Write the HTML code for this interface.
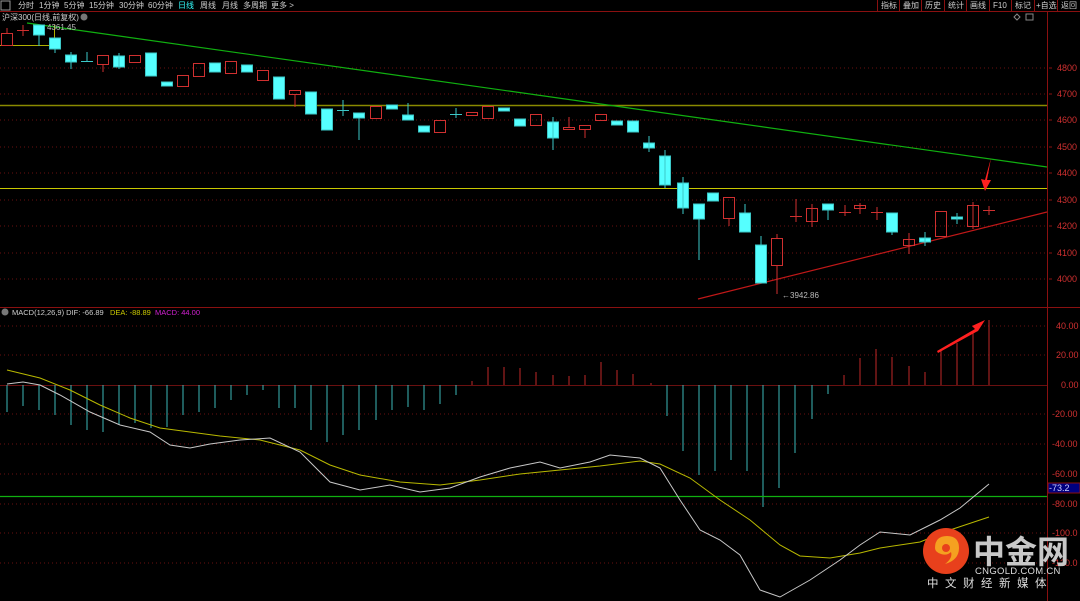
<!DOCTYPE html>
<html><head><meta charset="utf-8"><style>
body{margin:0;background:#000;width:1080px;height:601px;overflow:hidden;font-family:"Liberation Sans","Noto Sans CJK SC",sans-serif}
svg{display:block}
text{font-family:"Liberation Sans","Noto Sans CJK SC",sans-serif}
</style></head><body>
<svg width="1080" height="601" viewBox="0 0 1080 601">
<rect width="1080" height="601" fill="#000"/>
<!-- top bar -->
<line x1="0" y1="11.5" x2="1080" y2="11.5" stroke="#8a1010"/>
<rect x="1" y="1" width="9" height="9" fill="none" stroke="#999"/>
<g font-size="8" fill="#cfcfcf">
<text x="18" y="8">分时</text><text x="39" y="8">1分钟</text><text x="64" y="8">5分钟</text><text x="89" y="8">15分钟</text><text x="119" y="8">30分钟</text><text x="148" y="8">60分钟</text>
<text x="178" y="8" fill="#33ffff">日线</text><text x="200" y="8">周线</text><text x="222" y="8">月线</text><text x="243" y="8">多周期</text><text x="271" y="8">更多 &gt;</text>
<text x="881" y="8">指标</text><text x="903" y="8">叠加</text><text x="925" y="8">历史</text><text x="948" y="8">统计</text><text x="970" y="8">画线</text><text x="993" y="8">F10</text><text x="1015" y="8">标记</text><text x="1036" y="8">+自选</text><text x="1061" y="8">返回</text>
</g>
<g stroke="#8a1010"><line x1="877.5" y1="0" x2="877.5" y2="11"/><line x1="899.5" y1="0" x2="899.5" y2="11"/><line x1="921.5" y1="0" x2="921.5" y2="11"/><line x1="944.5" y1="0" x2="944.5" y2="11"/><line x1="966.5" y1="0" x2="966.5" y2="11"/><line x1="989.5" y1="0" x2="989.5" y2="11"/><line x1="1011.5" y1="0" x2="1011.5" y2="11"/><line x1="1034.5" y1="0" x2="1034.5" y2="11"/><line x1="1057.5" y1="0" x2="1057.5" y2="11"/></g>
<text x="2" y="20" font-size="8" fill="#cfcfcf">沪深300(日线,前复权)</text>
<circle cx="84" cy="17" r="3.5" fill="#777"/>
<rect x="1026" y="14" width="7" height="6" fill="none" stroke="#888"/>
<path d="M1017 14 l3 3 l-3 3 l-3 -3z" fill="none" stroke="#888"/>
<!-- axis -->
<line x1="1047.5" y1="12" x2="1047.5" y2="601" stroke="#8a1010"/>
<line x1="0" y1="307.5" x2="1080" y2="307.5" stroke="#8a1010"/>
<g stroke="#6a1010" stroke-dasharray="1 3">
<line x1="0" y1="68" x2="1047" y2="68"/><line x1="0" y1="94" x2="1047" y2="94"/><line x1="0" y1="120" x2="1047" y2="120"/><line x1="0" y1="147" x2="1047" y2="147"/><line x1="0" y1="173" x2="1047" y2="173"/><line x1="0" y1="200" x2="1047" y2="200"/><line x1="0" y1="226" x2="1047" y2="226"/><line x1="0" y1="253" x2="1047" y2="253"/><line x1="0" y1="279" x2="1047" y2="279"/>
<line x1="0" y1="326" x2="1047" y2="326"/><line x1="0" y1="355" x2="1047" y2="355"/><line x1="0" y1="414" x2="1047" y2="414"/><line x1="0" y1="444" x2="1047" y2="444"/><line x1="0" y1="474" x2="1047" y2="474"/><line x1="0" y1="504" x2="1047" y2="504"/><line x1="0" y1="533" x2="1047" y2="533"/><line x1="0" y1="563" x2="1047" y2="563"/>
</g>
<line x1="0" y1="385.5" x2="1047" y2="385.5" stroke="#6a1010"/>
<g font-size="9" fill="#d03030">
<text x="1057" y="71">4800</text><text x="1057" y="97">4700</text><text x="1057" y="123">4600</text><text x="1057" y="150">4500</text><text x="1057" y="176">4400</text><text x="1057" y="203">4300</text><text x="1057" y="229">4200</text><text x="1057" y="256">4100</text><text x="1057" y="282">4000</text>
<text x="1056" y="329">40.00</text><text x="1056" y="358">20.00</text><text x="1061" y="388">0.00</text><text x="1052" y="417">-20.00</text><text x="1052" y="447">-40.00</text><text x="1052" y="477">-60.00</text><text x="1052" y="507">-80.00</text><text x="1052" y="536">-100.0</text><text x="1052" y="566">-120.0</text>
</g>
<rect x="1048" y="483" width="32" height="10" fill="#000080" stroke="#8a1010"/>
<text x="1049" y="491" font-size="9" fill="#ccf">-73.2</text>
<g stroke="#8a1010"><line x1="1049" y1="68" x2="1052" y2="68"/><line x1="1049" y1="94" x2="1052" y2="94"/><line x1="1049" y1="120" x2="1052" y2="120"/><line x1="1049" y1="147" x2="1052" y2="147"/><line x1="1049" y1="173" x2="1052" y2="173"/><line x1="1049" y1="200" x2="1052" y2="200"/><line x1="1049" y1="226" x2="1052" y2="226"/><line x1="1049" y1="253" x2="1052" y2="253"/><line x1="1049" y1="279" x2="1052" y2="279"/></g>
<!-- lines -->
<line x1="0" y1="105.5" x2="1047" y2="105.5" stroke="#8a8a00" stroke-width="1.5"/>
<line x1="0" y1="188.5" x2="1047" y2="188.5" stroke="#c8c800"/>
<line x1="0" y1="45.5" x2="55" y2="45.5" stroke="#b0b000"/>
<line x1="54.5" y1="25" x2="54.5" y2="45" stroke="#b0b000"/>
<line x1="27" y1="23" x2="1047" y2="167" stroke="#10b010" stroke-width="1.2"/>
<line x1="698" y1="299" x2="1047" y2="212" stroke="#c01818" stroke-width="1.2"/>
<text x="47" y="30" font-size="8" fill="#bbb">4361.45</text>
<text x="782" y="298" font-size="8" fill="#bbb">←3942.86</text>
<!-- candles -->
<g fill="#55ffff" stroke="#3cc8c8">
<rect x="33.5" y="25" width="11" height="10"/><rect x="49.5" y="38" width="11" height="11"/><rect x="65.5" y="55" width="11" height="7"/><rect x="113.5" y="56" width="11" height="11"/><rect x="145.5" y="53" width="11" height="23"/><rect x="161.5" y="82" width="11" height="4"/><rect x="209.5" y="63" width="11" height="9"/><rect x="241.5" y="65" width="11" height="7"/><rect x="273.5" y="77" width="11" height="22"/><rect x="305.5" y="92" width="11" height="22"/><rect x="321.5" y="109" width="11" height="21"/>
<rect x="353.5" y="113" width="11" height="5"/><rect x="386.5" y="105" width="11" height="4"/><rect x="402.5" y="115" width="11" height="5"/><rect x="418.5" y="126" width="11" height="6"/><rect x="498.5" y="108" width="11" height="3"/><rect x="514.5" y="119" width="11" height="7"/><rect x="547.5" y="122" width="11" height="16"/><rect x="611.5" y="121" width="11" height="4"/><rect x="627.5" y="121" width="11" height="11"/><rect x="643.5" y="143" width="11" height="5"/>
<rect x="659.5" y="156" width="11" height="29"/><rect x="677.5" y="183" width="11" height="25"/><rect x="693.5" y="204" width="11" height="15"/><rect x="707.5" y="193" width="11" height="8"/><rect x="739.5" y="213" width="11" height="19"/><rect x="755.5" y="245" width="11" height="38"/><rect x="822.5" y="204" width="11" height="6"/><rect x="886.5" y="213" width="11" height="19"/><rect x="919.5" y="238" width="11" height="4"/><rect x="951.5" y="217" width="11" height="2"/>
</g>
<g stroke="#3cc8c8">
<line x1="39" y1="35" x2="39" y2="46"/><line x1="55" y1="49" x2="55" y2="53"/><line x1="71" y1="52" x2="71" y2="69"/><line x1="87" y1="52" x2="87" y2="62"/><line x1="81" y1="61.5" x2="93" y2="61.5"/><line x1="119" y1="53" x2="119" y2="69"/><line x1="343" y1="100" x2="343" y2="116"/><line x1="337" y1="110.5" x2="349" y2="110.5"/><line x1="359" y1="118" x2="359" y2="140"/><line x1="408" y1="103" x2="408" y2="115"/><line x1="456" y1="108" x2="456" y2="118"/><line x1="450" y1="114.5" x2="462" y2="114.5"/><line x1="553" y1="117" x2="553" y2="150"/><line x1="649" y1="136" x2="649" y2="152"/><line x1="665" y1="150" x2="665" y2="188"/><line x1="683" y1="177" x2="683" y2="214"/><line x1="699" y1="219" x2="699" y2="260"/><line x1="745" y1="204" x2="745" y2="213"/><line x1="761" y1="236" x2="761" y2="245"/><line x1="828" y1="210" x2="828" y2="220"/><line x1="925" y1="232" x2="925" y2="246"/><line x1="957" y1="213" x2="957" y2="224"/><line x1="892" y1="232" x2="892" y2="235"/></g>
<g fill="none" stroke="#d03030">
<rect x="1.5" y="33.5" width="11" height="12"/><rect x="97.5" y="55.5" width="11" height="9"/><rect x="129.5" y="55.5" width="11" height="7"/><rect x="177.5" y="75.5" width="11" height="11"/><rect x="193.5" y="63.5" width="11" height="13"/><rect x="225.5" y="61.5" width="11" height="12"/><rect x="257.5" y="70.5" width="11" height="10"/><rect x="289.5" y="90.5" width="11" height="4"/>
<rect x="370.5" y="106.5" width="11" height="12"/><rect x="434.5" y="120.5" width="11" height="12"/><rect x="466.5" y="112.5" width="11" height="3"/><rect x="482.5" y="106.5" width="11" height="12"/><rect x="530.5" y="114.5" width="11" height="11"/><rect x="563.5" y="127.5" width="11" height="2"/><rect x="579.5" y="125.5" width="11" height="4"/><rect x="595.5" y="114.5" width="11" height="6"/>
<rect x="723.5" y="197.5" width="11" height="21"/><rect x="771.5" y="238.5" width="11" height="27"/><rect x="806.5" y="208.5" width="11" height="13"/><rect x="854.5" y="205.5" width="11" height="3"/><rect x="903.5" y="239.5" width="11" height="6"/><rect x="935.5" y="211.5" width="11" height="25"/><rect x="967.5" y="205.5" width="11" height="21"/>
</g>
<g stroke="#d03030">
<line x1="7" y1="28" x2="7" y2="33"/><line x1="23" y1="25" x2="23" y2="36"/><line x1="17" y1="30.5" x2="29" y2="30.5"/><line x1="103" y1="65" x2="103" y2="72"/><line x1="295" y1="95" x2="295" y2="107"/><line x1="569" y1="117" x2="569" y2="127"/><line x1="585" y1="130" x2="585" y2="138"/><line x1="729" y1="219" x2="729" y2="226"/><line x1="777" y1="234" x2="777" y2="238"/><line x1="777" y1="266" x2="777" y2="294"/>
<line x1="796" y1="199" x2="796" y2="222"/><line x1="790" y1="216.5" x2="802" y2="216.5"/><line x1="812" y1="204" x2="812" y2="227"/><line x1="845" y1="205" x2="845" y2="216"/><line x1="839" y1="212.5" x2="851" y2="212.5"/><line x1="860" y1="203" x2="860" y2="214"/><line x1="877" y1="207" x2="877" y2="220"/><line x1="871" y1="212.5" x2="883" y2="212.5"/><line x1="909" y1="233" x2="909" y2="254"/><line x1="973" y1="202" x2="973" y2="229"/><line x1="989" y1="206" x2="989" y2="215"/><line x1="983" y1="210.5" x2="995" y2="210.5"/>
</g>
<!-- red arrow main -->
<path d="M991 158 L987 180 L991 180 L985 191 L981 179 L985 180 Z" fill="#ff2020"/>
<!-- MACD header -->
<circle cx="5" cy="312" r="3.5" fill="#777"/>
<text x="12" y="315" font-size="7.5" fill="#cfcfcf">MACD(12,26,9) DIF: -66.89</text>
<text x="110" y="315" font-size="7.5" fill="#c8c800">DEA: -88.89</text>
<text x="155" y="315" font-size="7.5" fill="#d020d0">MACD: 44.00</text>
<!-- histogram -->
<g stroke="#3cb8b8">
<line x1="7" y1="385" x2="7" y2="412"/><line x1="23" y1="385" x2="23" y2="406"/><line x1="39" y1="385" x2="39" y2="410"/><line x1="55" y1="385" x2="55" y2="415"/><line x1="71" y1="385" x2="71" y2="425"/><line x1="87" y1="385" x2="87" y2="430"/><line x1="103" y1="385" x2="103" y2="432"/><line x1="119" y1="385" x2="119" y2="425"/><line x1="135" y1="385" x2="135" y2="423"/><line x1="151" y1="385" x2="151" y2="428"/><line x1="167" y1="385" x2="167" y2="427"/><line x1="183" y1="385" x2="183" y2="415"/><line x1="199" y1="385" x2="199" y2="412"/><line x1="215" y1="385" x2="215" y2="408"/><line x1="231" y1="385" x2="231" y2="400"/><line x1="247" y1="385" x2="247" y2="395"/><line x1="263" y1="385" x2="263" y2="390"/><line x1="279" y1="385" x2="279" y2="408"/><line x1="295" y1="385" x2="295" y2="408"/><line x1="311" y1="385" x2="311" y2="430"/><line x1="327" y1="385" x2="327" y2="442"/><line x1="343" y1="385" x2="343" y2="435"/><line x1="359" y1="385" x2="359" y2="430"/><line x1="376" y1="385" x2="376" y2="420"/><line x1="392" y1="385" x2="392" y2="410"/><line x1="408" y1="385" x2="408" y2="407"/><line x1="424" y1="385" x2="424" y2="410"/><line x1="440" y1="385" x2="440" y2="404"/><line x1="456" y1="385" x2="456" y2="395"/>
<line x1="667" y1="385" x2="667" y2="416"/><line x1="683" y1="385" x2="683" y2="451"/><line x1="699" y1="385" x2="699" y2="475"/><line x1="715" y1="385" x2="715" y2="471"/><line x1="731" y1="385" x2="731" y2="460"/><line x1="747" y1="385" x2="747" y2="471"/><line x1="763" y1="385" x2="763" y2="507"/><line x1="779" y1="385" x2="779" y2="488"/><line x1="795" y1="385" x2="795" y2="453"/><line x1="812" y1="385" x2="812" y2="419"/><line x1="828" y1="385" x2="828" y2="394"/>
</g>
<g stroke="#c02828">
<line x1="472" y1="385" x2="472" y2="381"/><line x1="488" y1="385" x2="488" y2="367"/><line x1="504" y1="385" x2="504" y2="367"/><line x1="520" y1="385" x2="520" y2="368"/><line x1="536" y1="385" x2="536" y2="372"/><line x1="553" y1="385" x2="553" y2="375"/><line x1="569" y1="385" x2="569" y2="376"/><line x1="585" y1="385" x2="585" y2="375"/><line x1="601" y1="385" x2="601" y2="362"/><line x1="617" y1="385" x2="617" y2="370"/><line x1="633" y1="385" x2="633" y2="374"/><line x1="651" y1="385" x2="651" y2="383"/>
<line x1="844" y1="385" x2="844" y2="375"/><line x1="860" y1="385" x2="860" y2="358"/><line x1="876" y1="385" x2="876" y2="349"/><line x1="892" y1="385" x2="892" y2="357"/><line x1="909" y1="385" x2="909" y2="366"/><line x1="925" y1="385" x2="925" y2="372"/><line x1="941" y1="385" x2="941" y2="351"/><line x1="957" y1="385" x2="957" y2="343"/><line x1="973" y1="385" x2="973" y2="332"/><line x1="989" y1="385" x2="989" y2="320"/>
</g>
<line x1="0" y1="496.5" x2="1047" y2="496.5" stroke="#10b010" stroke-width="1.3"/>
<polyline fill="none" stroke="#b8b800" points="7,370 40,378 70,390 100,405 130,418 160,428 190,432 220,436 260,440 300,450 330,465 360,475 400,482 440,485 480,480 520,474 560,470 600,466 640,461 660,464 690,478 720,500 750,520 780,545 800,556 830,558 860,553 880,548 920,542 950,530 989,517"/>
<polyline fill="none" stroke="#c8c8c8" points="7,384 23,382 40,385 60,395 90,412 120,425 150,432 170,445 190,448 210,444 240,440 270,438 300,452 330,482 360,490 390,485 420,492 450,488 480,477 510,468 540,462 560,468 590,462 610,455 640,458 660,468 680,500 700,530 720,540 740,555 760,590 780,597 810,580 840,560 860,545 880,532 910,535 940,520 960,508 989,484"/>
<path d="M937 351 L975 329 L972 326 L985 320 L978 331 L976 332 L938 353Z" fill="#ff2020"/>
<!-- logo -->
<circle cx="946" cy="551" r="23" fill="#e8401c"/>
<path d="M935 548 q0-12 12-12 q12 0 12 12 q0 12-14 16 q8-6 6-12 q-4 4-10 2 q-6-2-6-6z" fill="#f5a020"/>
<circle cx="946" cy="548" r="4" fill="#e8401c"/>
<text x="973" y="563" font-size="32" font-weight="bold" fill="#c8c8c8" font-family="'Noto Sans CJK SC',sans-serif">中金网</text>
<text x="975" y="574" font-size="9.5" fill="#ddd" letter-spacing="0.3">CNGOLD.COM.CN</text>
<text x="927" y="587" font-size="11.5" fill="#ddd" letter-spacing="6.5" font-family="'Noto Sans CJK SC',sans-serif">中文财经新媒体</text>
</svg>
</body></html>
